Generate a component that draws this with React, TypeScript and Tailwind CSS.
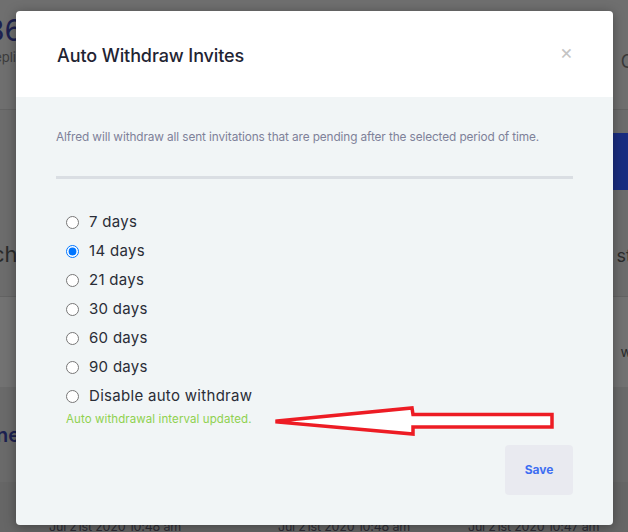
import React from "react";

const options = ["7 days", "14 days", "21 days", "30 days", "60 days", "90 days", "Disable auto withdraw"];

const RedArrow = () => (
  <svg className="absolute left-[270px] top-[402px]" width="290" height="40" viewBox="270 402 290 40">
    <path
      d="M277 421 L412 408 L413 414.5 L552 414.5 L552 427 L413 427 L413 434 L277 422 Z"
      fill="#ffffff"
      stroke="#ed1c24"
      strokeWidth="3.5"
      strokeLinejoin="miter"
    />
  </svg>
);

const Background = () => (
  <div className="flex h-[532px] w-[628px] flex-col bg-[#6f6f6f] font-['Inter',sans-serif] text-[#2a2a33]">
    <div className="flex h-[110px] justify-between border-b border-[#636363]">
      <div className="ml-[-14px] mt-[12px] flex flex-col">
        <span className="text-[30px] leading-[36px] text-[#1c2150]">366</span>
        <span className="text-[13px] text-[#3c3c3c]">Replies</span>
      </div>
      <span className="mr-[-6px] mt-[48px] text-[18px] text-[#3a3a3a]">C</span>
    </div>
    <div className="flex h-[187px] justify-between border-b border-[#636363] bg-[#6c6c6c]">
      <span className="ml-[-8px] mt-[128px] text-[22px] text-[#2a2a2a]">ch</span>
      <div className="flex flex-col items-end">
        <div className="mt-[23px] flex h-[57px] w-[40px] items-center bg-[#1a2d80] pl-[2px] text-[15px] font-bold text-[#8d96b8]">
          als
        </div>
        <span className="mr-[-4px] mt-[52px] text-[18px] text-[#2a2a2a]">st</span>
      </div>
    </div>
    <div className="flex h-[90px] justify-end bg-[#727272]">
      <span className="mr-[-4px] mt-[44px] text-[14px] text-[#2a2a2a]">w</span>
    </div>
    <div className="flex h-[95px] items-start bg-[#6a6a6a]">
      <span className="ml-[-4px] mt-[33px] text-[20px] font-semibold text-[#1c2150]">ne'</span>
    </div>
    <div className="flex flex-1 items-end whitespace-nowrap bg-[#666666] text-[12.5px] tracking-[-0.2px] text-[#2d2d35]">
      <span className="mb-[-5px] ml-[49px] shrink-0">Jul 21st 2020 10:48 am</span>
      <span className="mb-[-5px] ml-[97px] shrink-0">Jul 21st 2020 10:48 am</span>
      <span className="mb-[-5px] ml-[58px] shrink-0">Jul 21st 2020 10:47 am</span>
    </div>
  </div>
);

export default function App() {
  return (
    <div className="relative h-[532px] w-[628px] overflow-hidden font-['Inter',sans-serif]">
      <Background />
      <div className="absolute left-[16px] top-[11px] flex h-[514px] w-[597px] flex-col overflow-hidden rounded-[4px] shadow-[0_2px_12px_rgba(0,0,0,0.35)]">
        <div className="flex h-[86px] items-center justify-between bg-white pl-[41px] pr-[40px]">
          <h2 className="mt-[3px] text-[18px] font-medium tracking-[-0.1px] text-[#1f2433]">Auto Withdraw Invites</h2>
          <span className="mt-[-4px] text-[20px] leading-none text-[#c4c4c4]">×</span>
        </div>
        <div className="flex flex-1 flex-col bg-[#f1f5f6] px-[40px]">
          <p className="mt-[32px] text-[11.8px] leading-[16px] tracking-[-0.1px] text-[#7e8199]">
            Alfred will withdraw all sent invitations that are pending after the selected period of time.
          </p>
          <div className="mt-[31px] h-[3px] w-full bg-[#dadee3]" />
          <div className="mt-[33px] flex flex-col gap-[8px] pl-[10px]">
            {options.map((o) => (
              <label key={o} className="flex h-[21px] items-center gap-[10px] text-[15px] tracking-[0.3px] text-[#2a2d37]">
                <input
                  type="radio"
                  name="withdraw"
                  defaultChecked={o === "14 days"}
                  className="m-0 h-[13px] w-[13px]"
                />
                <span>{o}</span>
              </label>
            ))}
          </div>
          <p className="mt-[4px] pl-[10px] text-[11.5px] tracking-[0.1px] text-[#8fd14f]">Auto withdrawal interval updated.</p>
          <div className="mt-[17px] flex justify-end">
            <button className="h-[50px] w-[68px] rounded-[4px] bg-[#e9eaf0] text-[12px] font-bold text-[#3e6ef2]">
              Save
            </button>
          </div>
        </div>
      </div>
      <RedArrow />
    </div>
  );
}
